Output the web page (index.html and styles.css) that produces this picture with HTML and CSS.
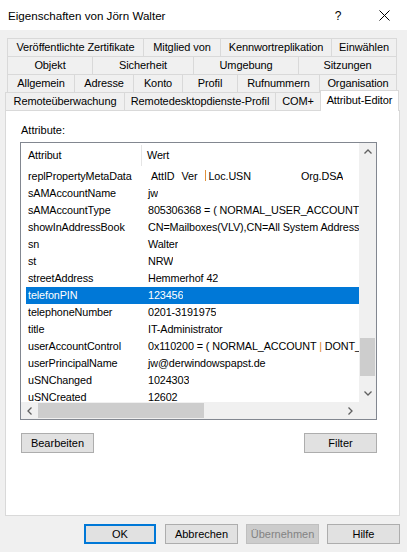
FILE: index.html
```html
<!DOCTYPE html>
<html lang="de">
<head>
<meta charset="utf-8">
<title>Eigenschaften von Jörn Walter</title>
<link rel="stylesheet" href="styles.css">
</head>
<body>
<div class="dialog">
  <div class="titlebar">
    <div class="title">Eigenschaften von Jörn Walter</div>
    <div class="tbtn help">?</div>
    <div class="tbtn close">
      <svg width="11" height="11" viewBox="0 0 11 11"><path d="M0.5 0.5 L10.5 10.5 M10.5 0.5 L0.5 10.5" stroke="#000" stroke-width="1" fill="none"/></svg>
    </div>
  </div>

  <div class="tabs">
    <div class="row">
      <div class="tab w136">Veröffentlichte Zertifikate</div>
      <div class="tab w77">Mitglied von</div>
      <div class="tab w111">Kennwortreplikation</div>
      <div class="tab w66">Einwählen</div>
    </div>
    <div class="row">
      <div class="tab w85">Objekt</div>
      <div class="tab w101">Sicherheit</div>
      <div class="tab w105">Umgebung</div>
      <div class="tab w99">Sitzungen</div>
    </div>
    <div class="row">
      <div class="tab w67">Allgemein</div>
      <div class="tab w59">Adresse</div>
      <div class="tab w49">Konto</div>
      <div class="tab w55">Profil</div>
      <div class="tab w82">Rufnummern</div>
      <div class="tab w78">Organisation</div>
    </div>
    <div class="row front">
      <div class="tab w119">Remoteüberwachung</div>
      <div class="tab w151">Remotedesktopdienste-Profil</div>
      <div class="tab w45">COM+</div>
      <div class="tab sel w79">Attribut-Editor</div>
    </div>
  </div>

  <div class="page">
    <div class="label">Attribute:</div>
    <div class="list">
      <div class="lv">
        <div class="lvh">
          <div class="hc1">Attribut</div>
          <div class="hc2">Wert</div>
        </div>
        <div class="r"><div class="a">replPropertyMetaData</div><div class="v"><span class="m1">AttID</span><span class="m2">Ver</span><span class="bar"></span><span class="m3">Loc.USN</span><span class="m4">Org.DSA</span></div></div>
        <div class="r"><div class="a">sAMAccountName</div><div class="v">jw</div></div>
        <div class="r"><div class="a">sAMAccountType</div><div class="v">805306368 = ( NORMAL_USER_ACCOUNT</div></div>
        <div class="r"><div class="a">showInAddressBook</div><div class="v">CN=Mailboxes(VLV),CN=All System Address</div></div>
        <div class="r"><div class="a">sn</div><div class="v">Walter</div></div>
        <div class="r"><div class="a">st</div><div class="v">NRW</div></div>
        <div class="r"><div class="a">streetAddress</div><div class="v">Hemmerhof 42</div></div>
        <div class="r sel"><div class="a">telefonPIN</div><div class="v">123456</div></div>
        <div class="r"><div class="a">telephoneNumber</div><div class="v">0201-3191975</div></div>
        <div class="r"><div class="a">title</div><div class="v">IT-Administrator</div></div>
        <div class="r"><div class="a">userAccountControl</div><div class="v">0x110200 = ( NORMAL_ACCOUNT <span class="pipe">|</span> DONT_</div></div>
        <div class="r"><div class="a">userPrincipalName</div><div class="v">jw@derwindowspapst.de</div></div>
        <div class="r"><div class="a">uSNChanged</div><div class="v">1024303</div></div>
        <div class="r"><div class="a">uSNCreated</div><div class="v">12602</div></div>
      </div>
      <div class="vs">
        <div class="arr"><svg width="8" height="5" viewBox="0 0 8 5"><path d="M0.5 4.5 L4 1 L7.5 4.5" stroke="#606060" stroke-width="1.3" fill="none"/></svg></div>
        <div class="vtrack"></div>
        <div class="vthumb"></div>
        <div class="vgap"></div>
        <div class="arr"><svg width="8" height="5" viewBox="0 0 8 5"><path d="M0.5 0.5 L4 4 L7.5 0.5" stroke="#606060" stroke-width="1.3" fill="none"/></svg></div>
      </div>
      <div class="hs">
        <div class="harr"><svg width="5" height="8" viewBox="0 0 5 8"><path d="M4.5 0.5 L1 4 L4.5 7.5" stroke="#606060" stroke-width="1.3" fill="none"/></svg></div>
        <div class="hthumb"></div>
        <div class="htrack"></div>
        <div class="harr"><svg width="5" height="8" viewBox="0 0 5 8"><path d="M0.5 0.5 L4 4 L0.5 7.5" stroke="#606060" stroke-width="1.3" fill="none"/></svg></div>
      </div>
      <div class="corner"></div>
    </div>
    <div class="pbtns">
      <button class="btn">Bearbeiten</button>
      <button class="btn">Filter</button>
    </div>
  </div>

  <div class="footer">
    <button class="btn ok">OK</button>
    <button class="btn">Abbrechen</button>
    <button class="btn dis">Übernehmen</button>
    <button class="btn">Hilfe</button>
  </div>
</div>
</body>
</html>
```
FILE: styles.css
```css
html, body {
  margin: 0;
  padding: 0;
}
body {
  width: 407px;
  height: 552px;
  overflow: hidden;
  background: #f0f0f0;
  font-family: "Liberation Sans", Arial, sans-serif;
  font-size: 11px;
  color: #000;
}
.dialog {
  width: 407px;
  height: 552px;
}
.titlebar {
  height: 30px;
  background: #fff;
  display: flex;
  align-items: center;
}
.title {
  flex: 1;
  padding-left: 8px;
  font-size: 11.6px;
  padding-top: 1px;
}
.tbtn {
  width: 46px;
  height: 30px;
  display: flex;
  align-items: center;
  justify-content: center;
}
.help {
  font-size: 12px;
  padding-top: 1px;
  box-sizing: border-box;
}
.tabs {
  padding-top: 8px;
}
.row {
  display: flex;
  height: 18px;
  margin-left: 7px;
  width: 390px;
}
.row.front {
  margin-left: 5px;
  width: 394px;
  align-items: flex-end;
}
.tab {
  box-sizing: border-box;
  height: 18px;
  flex: none;
  border-top: 1px solid #d9d9d9;
  border-left: 1px solid #d9d9d9;
  background: #f0f0f0;
  text-align: center;
  line-height: 16px;
  white-space: nowrap;
  overflow: hidden;
  letter-spacing: -0.1px;
}
.tab:last-child {
  border-right: 1px solid #d9d9d9;
}
.tab.sel {
  height: 21px;
  margin-bottom: -1px;
  background: #fff;
  border-right: 1px solid #d9d9d9;
  position: relative;
  z-index: 2;
  line-height: 18px;
}
.w136 { width: 136px; }
.w77 { width: 77px; }
.w111 { width: 111px; }
.w66 { width: 66px; }
.w85 { width: 85px; }
.w101 { width: 101px; }
.w105 { width: 105px; }
.w99 { width: 99px; }
.w67 { width: 67px; }
.w59 { width: 59px; }
.w49 { width: 49px; }
.w55 { width: 55px; }
.w82 { width: 82px; }
.w78 { width: 78px; }
.w119 { width: 119px; }
.w151 { width: 151px; }
.w45 { width: 45px; }
.w79 { width: 79px; }

.page {
  box-sizing: border-box;
  margin-left: 5px;
  width: 395px;
  height: 406px;
  background: #fff;
  border: 1px solid #d9d9d9;
  padding: 13px 0 0 14px;
  position: relative;
  z-index: 1;
}
.label {
  height: 13px;
  line-height: 13px;
  margin-left: 1px;
}
.list {
  margin-top: 5px;
  box-sizing: border-box;
  width: 357px;
  height: 278px;
  border: 1px solid #828790;
  display: grid;
  grid-template-columns: 1fr 17px;
  grid-template-rows: 1fr 17px;
  font-size: 10.8px;
  letter-spacing: -0.1px;
}
.lv {
  overflow: hidden;
  background: #fff;
}
.lvh {
  display: flex;
  height: 25px;
  align-items: stretch;
}
.hc1 {
  box-sizing: border-box;
  width: 121px;
  padding-left: 7px;
  border-right: 1px solid #e5e5e5;
  margin-top: 2px;
  margin-bottom: 2px;
  line-height: 20px;
}
.hc2 {
  padding-left: 5px;
  line-height: 24px;
}
.r {
  display: flex;
  height: 17px;
  line-height: 17px;
  margin-left: 5px;
  white-space: nowrap;
}
.r .a {
  box-sizing: border-box;
  width: 116px;
  flex: none;
  padding-left: 2px;
}
.r .v {
  padding-left: 6px;
  white-space: nowrap;
  overflow: hidden;
}
.r.sel {
  background: #0078d7;
  color: #fff;
}
.m1 { margin-left: 3px; }
.m2 { margin-left: 7px; }
.bar {
  display: inline-block;
  width: 1px;
  height: 11px;
  background: #e0913a;
  margin-left: 8px;
  vertical-align: -1px;
}
.m3 { margin-left: 2px; }
.m4 { margin-left: 50px; }
.pipe { color: #d9822b; }

.vs {
  background: #f0f0f0;
  display: flex;
  flex-direction: column;
}
.arr {
  height: 17px;
  flex: none;
  display: flex;
  align-items: center;
  justify-content: center;
}
.vtrack { flex: 1; }
.vthumb {
  height: 38px;
  margin: 0 1px;
  background: #cdcdcd;
  flex: none;
}
.vgap { height: 9px; flex: none; }
.hs {
  background: #f0f0f0;
  display: flex;
}
.harr {
  width: 17px;
  flex: none;
  display: flex;
  align-items: center;
  justify-content: center;
}
.hthumb {
  width: 166px;
  margin: 1px 0;
  background: #cdcdcd;
  flex: none;
}
.htrack { flex: 1; }
.corner { background: #f0f0f0; }

.btn {
  box-sizing: border-box;
  width: 73px;
  height: 20px;
  border: 1px solid #adadad;
  background: #e1e1e1;
  font-family: "Liberation Sans", Arial, sans-serif;
  font-size: 11px;
  color: #000;
  padding: 0;
  margin: 0;
}
.pbtns {
  display: flex;
  justify-content: space-between;
  width: 357px;
  margin-top: 13px;
  padding-left: 1px;
  box-sizing: border-box;
}
.footer {
  display: flex;
  justify-content: flex-end;
  gap: 8px;
  padding-right: 7px;
  margin-top: 8px;
}
.btn.ok {
  width: 72px;
  border: 2px solid #0078d7;
  margin-right: 1px;
}
.btn.dis {
  background: #cccccc;
  border-color: #bfbfbf;
  color: #838383;
}
```
